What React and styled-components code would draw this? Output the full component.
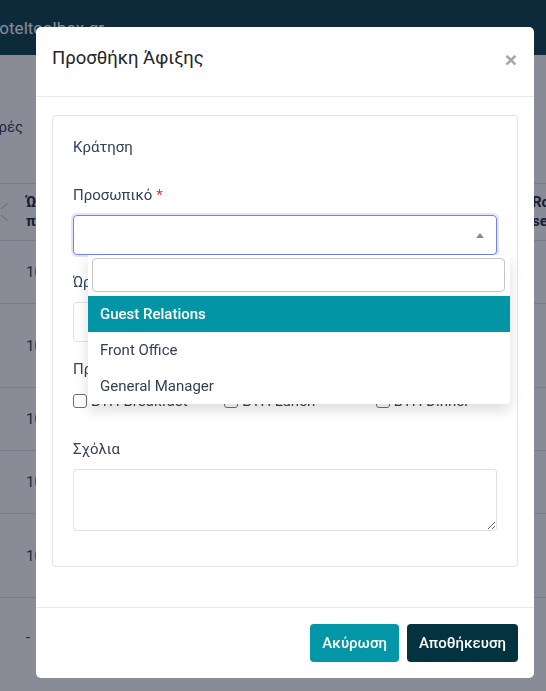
// Imports
import styled, {createGlobalStyle} from 'styled-components'



// Styles
const GlobalStyle = createGlobalStyle`
    html, body {
        margin:0;
        padding:0;
        height:100%;
        overflow:hidden;
    }
    body {
        background-color:#fff;
        font-family:Roboto, "Noto Sans", sans-serif;
    }
    * {
        box-sizing:border-box;
    }
`
const Page = styled.div`
    width:100%;
    height:100vh;
    overflow:hidden;
    background-color:#fff;
`
const Navbar = styled.header`
    height:55px;
    display:flex;
    align-items:center;
    background-color:#063c44;
`
const Brand = styled.span`
    color:#fff;
    font-size:17px;
    margin-left:-10px;
    white-space:nowrap;
`
const Toolbar = styled.div`
    height:128px;
    padding-top:61px;
`
const PageTitle = styled.h3`
    margin:0 0 0 -58px;
    font-size:15px;
    font-weight:400;
    line-height:22px;
    color:#2b3450;
    white-space:nowrap;
`
const Table = styled.div`
    display:flex;
    flex-direction:column;
`
const Row = styled.div`
    display:grid;
    height:${p => p.$h}px;
    align-items:center;
    border-top:1px solid #dde1e6;
    grid-template-columns:26px 1fr 14px;
`
const HeadCell = styled.div`
    font-size:15px;
    font-weight:700;
    line-height:19px;
    color:#1b2440;
    white-space:nowrap;
`
const Cell = styled.div`
    font-size:15px;
    color:#2f3854;
    white-space:nowrap;
`
const Backdrop = styled.div`
    inset:0;
    display:flex;
    position:fixed;
    align-items:flex-start;
    padding:27px 0 0 36px;
    background-color:rgba(20,24,48,0.5);
`
const Modal = styled.div`
    width:498px;
    display:flex;
    border-radius:5px;
    flex-direction:column;
    background-color:#fff;
`
const ModalHeader = styled.div`
    display:flex;
    align-items:flex-start;
    padding:17px 16px 24px 16px;
    justify-content:space-between;
    border-bottom:1px solid #e6e9ed;
`
const ModalTitle = styled.h5`
    margin:0;
    font-size:18.5px;
    font-weight:400;
    line-height:28px;
    color:#212529;
`
const CloseButton = styled.button`
    border:none;
    padding:0;
    margin:6px 1px 0 0;
    cursor:pointer;
    font-size:21px;
    font-weight:700;
    line-height:20px;
    color:#a3a3a3;
    font-family:"Liberation Sans", sans-serif;
    background-color:transparent;
`
const ModalBody = styled.div`
    padding:18px 16px 16px 16px;
`
const Card = styled.div`
    padding:20px;
    margin-bottom:24px;
    border-radius:4px;
    border:1px solid #dfe5ee;
`
const SectionTitle = styled.div`
    font-size:15px;
    line-height:22px;
    margin-bottom:26px;
    color:#35405a;
`
const FormGroup = styled.div`
    margin-bottom:${p => p.$mb || 16}px;
`
const Label = styled.label`
    display:block;
    font-size:15px;
    line-height:22px;
    color:#35405a;
    margin-bottom:${p => p.$mb || 9}px;
`
const Required = styled.span`
    color:#e3342f;
    margin-left:4px;
`
const SelectWrap = styled.div`
    position:relative;
`
const SelectBox = styled.div`
    height:40px;
    display:flex;
    padding:0 12px;
    border-radius:4px;
    align-items:center;
    justify-content:flex-end;
    border:1px solid #6f84e0;
    box-shadow:0 0 0 2px rgba(120,138,230,0.22);
`
const Arrow = styled.span`
    width:0;
    height:0;
    border-left:4px solid transparent;
    border-right:4px solid transparent;
    border-bottom:5px solid #8a8a8a;
`
const Dropdown = styled.div`
    top:40px;
    left:15px;
    z-index:10;
    width:422px;
    position:absolute;
    padding-top:3px;
    border-radius:0 0 4px 4px;
    background-color:#fff;
    box-shadow:0 6px 14px rgba(0,0,0,0.14);
`
const SearchInput = styled.input`
    width:413px;
    height:34px;
    outline:none;
    display:block;
    margin:0 0 4px 4px;
    border-radius:4px;
    border:1px solid #c6c6c6;
    background-color:#fff;
`
const Option = styled.div`
    height:36px;
    padding:0 12px;
    font-size:15px;
    line-height:36px;
    font-weight:${p => p.$active ? 500 : 400};
    color:${p => p.$active ? '#fff' : '#34405a'};
    background-color:${p => p.$active ? '#0295a5' : 'transparent'};
    border-radius:${p => p.$last ? '0 0 4px 4px' : '0'};
`
const Input = styled.input`
    width:100%;
    height:40px;
    display:block;
    outline:none;
    border-radius:4px;
    border:1px solid #dde3ea;
`
const CheckRow = styled.div`
    height:26px;
    display:grid;
    margin:0 -15px;
    grid-template-columns:repeat(3, 1fr);
`
const CheckItem = styled.label`
    gap:4px;
    display:flex;
    padding:0 15px;
    font-size:15px;
    color:#35405a;
    align-items:center;
    white-space:nowrap;
`
const Checkbox = styled.input`
    margin:0;
    width:14px;
    height:14px;
    appearance:none;
    border-radius:3px;
    border:1px solid #6e6e6e;
    background-color:#fff;
`
const TextArea = styled.textarea`
    width:100%;
    height:62px;
    display:block;
    outline:none;
    border-radius:3px;
    border:1px solid #dde3ea;
`
const ModalFooter = styled.div`
    gap:8px;
    display:flex;
    padding:16px;
    justify-content:flex-end;
    border-top:1px solid #e6e9ed;
`
const Button = styled.button`
    height:38px;
    border:none;
    color:#fff;
    padding:0 12px;
    cursor:pointer;
    font-size:15px;
    font-weight:500;
    border-radius:4px;
    font-family:Roboto, sans-serif;
    background-color:${p => p.$dark ? '#02333e' : '#0396a6'};
`



// Data
const rows = [
    {h:63, time:'10:00'},
    {h:84, time:'10:30'},
    {h:63, time:'10:30'},
    {h:63, time:'10:45'},
    {h:84, time:'10:45'},
    {h:78, time:'-'},
]
const options = ['Guest Relations', 'Front Office', 'General Manager']



// Sort Icon
const SortIcon = () => (
    <svg width="10" height="24" viewBox="0 0 10 24" fill="none" stroke="#cfd3da" strokeWidth="1.2">
        <path d="M1 9 L8 3"/>
        <path d="M1 15 L8 21"/>
    </svg>
)



// Main Function
const App = () => {
  return (
    <>
        <GlobalStyle/>
        <Page>
            <Navbar><Brand>hoteltoolbox.gr</Brand></Navbar>
            <Toolbar><PageTitle>Μεταφορές</PageTitle></Toolbar>
            <Table>
                <Row $h={57}>
                    <SortIcon/>
                    <HeadCell>Ώρα<br/>παραλαβής</HeadCell>
                    <HeadCell>Room<br/>service</HeadCell>
                </Row>
                {rows.map((r, i) => (
                    <Row key={i} $h={r.h}>
                        <Cell/>
                        <Cell>{r.time}</Cell>
                        <Cell/>
                    </Row>
                ))}
            </Table>
        </Page>
        <Backdrop>
            <Modal>
                <ModalHeader>
                    <ModalTitle>Προσθήκη Άφιξης</ModalTitle>
                    <CloseButton>×</CloseButton>
                </ModalHeader>
                <ModalBody>
                    <Card>
                        <SectionTitle>Κράτηση</SectionTitle>
                        <FormGroup>
                            <Label>Προσωπικό<Required>*</Required></Label>
                            <SelectWrap>
                                <SelectBox><Arrow/></SelectBox>
                                <Dropdown>
                                    <SearchInput type="text"/>
                                    {options.map((o, i) => (
                                        <Option key={o} $active={i === 0} $last={i === options.length - 1}>{o}</Option>
                                    ))}
                                </Dropdown>
                            </SelectWrap>
                        </FormGroup>
                        <FormGroup>
                            <Label>Ώρα άφιξης</Label>
                            <Input type="text"/>
                        </FormGroup>
                        <FormGroup $mb={24}>
                            <Label $mb={8}>Προτιμήσεις</Label>
                            <CheckRow>
                                <CheckItem><Checkbox type="checkbox"/>BTH Breakfast</CheckItem>
                                <CheckItem><Checkbox type="checkbox"/>BTH Lunch</CheckItem>
                                <CheckItem><Checkbox type="checkbox"/>BTH Dinner</CheckItem>
                            </CheckRow>
                        </FormGroup>
                        <FormGroup $mb={15}>
                            <Label>Σχόλια</Label>
                            <TextArea/>
                        </FormGroup>
                    </Card>
                </ModalBody>
                <ModalFooter>
                    <Button>Ακύρωση</Button>
                    <Button $dark>Αποθήκευση</Button>
                </ModalFooter>
            </Modal>
        </Backdrop>
    </>
  )
}



// Export
export default App
